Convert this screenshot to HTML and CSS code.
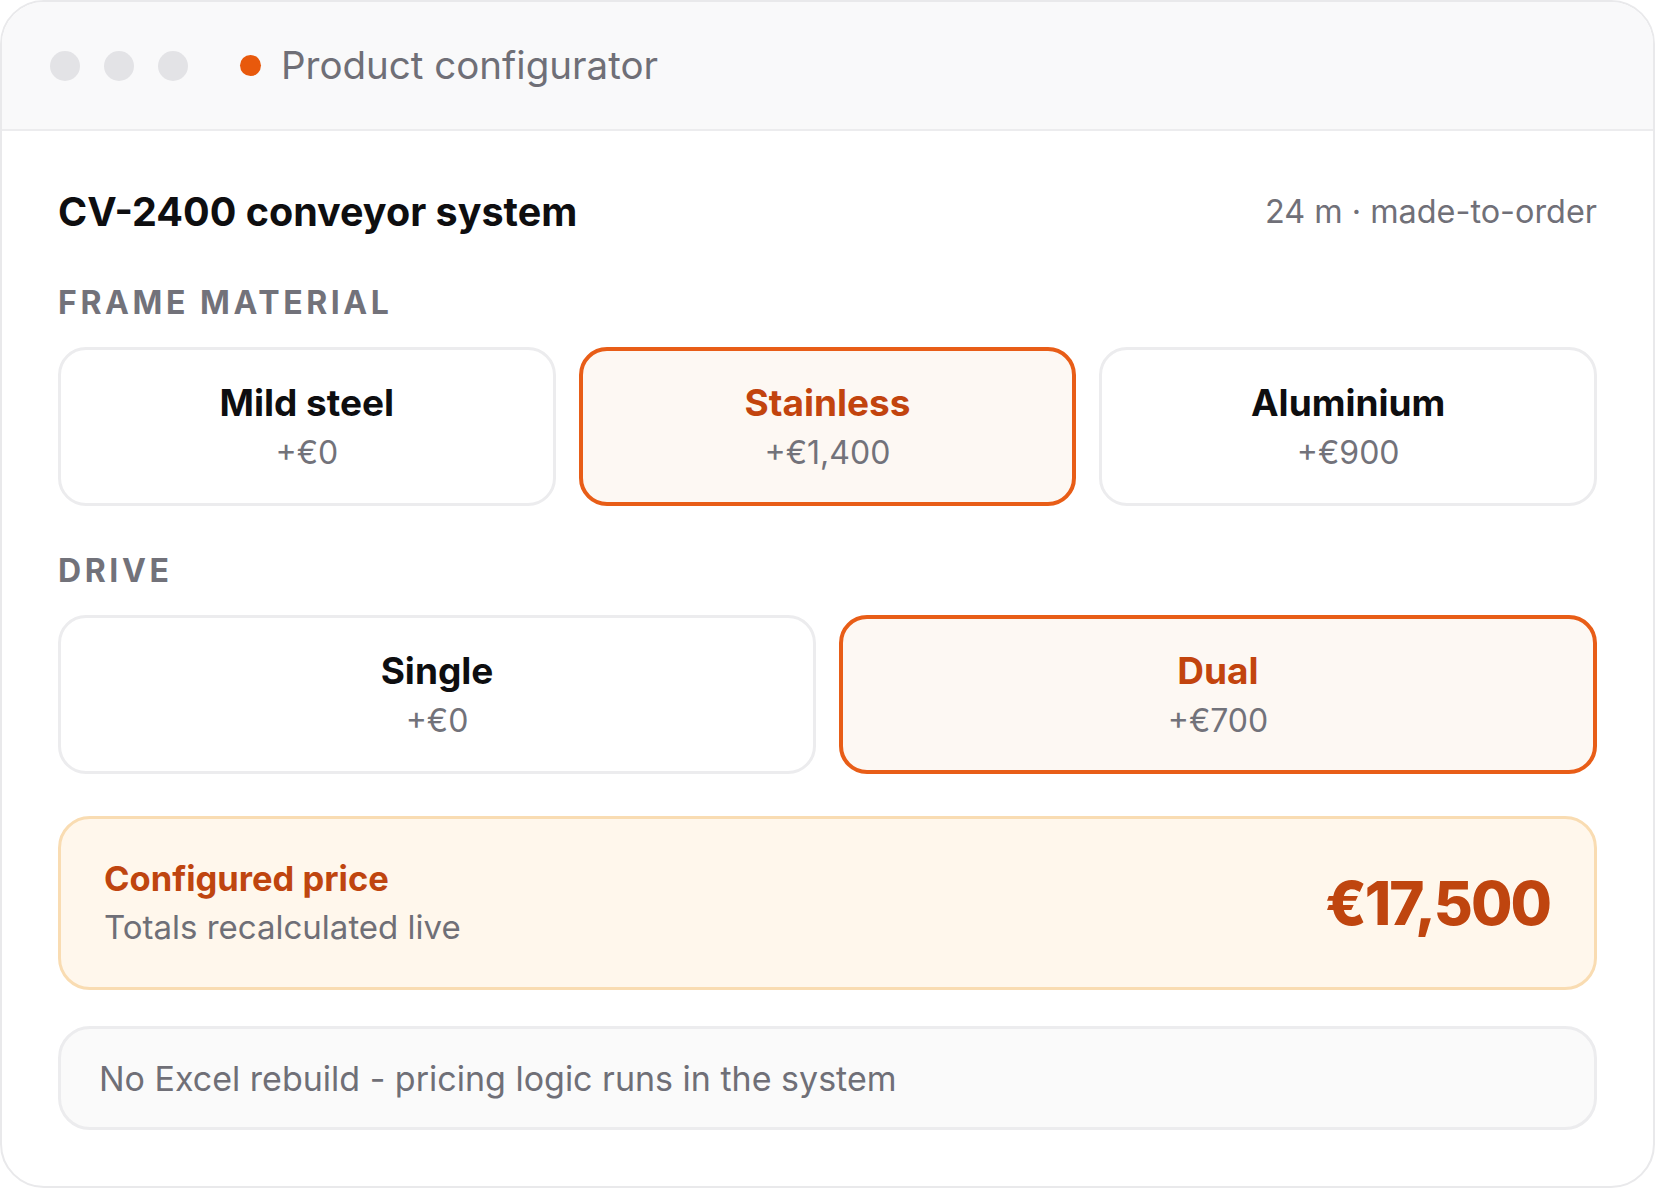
FILE: index.html
```html
<!DOCTYPE html>
<html lang="en">
<head>
<meta charset="utf-8">
<title>Product configurator</title>
<link rel="stylesheet" href="styles.css">
</head>
<body>
<div class="window">
  <header class="titlebar">
    <div class="dots">
      <span class="dot"></span><span class="dot"></span><span class="dot"></span>
    </div>
    <span class="live"></span>
    <span class="title">Product configurator</span>
  </header>
  <main class="content">
    <div class="head">
      <h1 class="product">CV-2400 conveyor system</h1>
      <span class="meta">24 m · made-to-order</span>
    </div>

    <h2 class="label label-frame">FRAME MATERIAL</h2>
    <div class="options three">
      <div class="option"><span class="opt-name">Mild steel</span><span class="opt-price">+€0</span></div>
      <div class="option selected"><span class="opt-name">Stainless</span><span class="opt-price">+€1,400</span></div>
      <div class="option"><span class="opt-name">Aluminium</span><span class="opt-price">+€900</span></div>
    </div>

    <h2 class="label label-drive">DRIVE</h2>
    <div class="options two">
      <div class="option"><span class="opt-name">Single</span><span class="opt-price">+€0</span></div>
      <div class="option selected"><span class="opt-name">Dual</span><span class="opt-price">+€700</span></div>
    </div>

    <section class="total">
      <div class="total-text">
        <span class="total-title">Configured price</span>
        <span class="total-sub">Totals recalculated live</span>
      </div>
      <span class="total-value">€17,500</span>
    </section>

    <div class="note">No Excel rebuild - pricing logic runs in the system</div>
  </main>
</div>
</body>
</html>
```

FILE: styles.css
```css
* { box-sizing: border-box; }

html, body {
  margin: 0;
  padding: 0;
  background: #ffffff;
}

body {
  font-family: Inter, "Noto Sans", "Liberation Sans", sans-serif;
  color: #111113;
}

.window {
  width: 1655px;
  height: 1188px;
  border: 2px solid #e9e9eb;
  border-radius: 44px;
  background: #ffffff;
  overflow: hidden;
}

.titlebar {
  height: 129px;
  background: #f9f9fa;
  border-bottom: 2px solid #ececee;
  display: flex;
  align-items: center;
  padding-left: 48px;
}

.dots {
  display: flex;
  gap: 24px;
}

.dot {
  width: 30px;
  height: 30px;
  border-radius: 50%;
  background: #e3e3e6;
}

.live {
  width: 21px;
  height: 21px;
  border-radius: 50%;
  background: #e8590c;
  margin-left: 52px;
}

.title {
  margin-left: 20px;
  font-size: 38.5px;
  color: #6f6f77;
  line-height: 1;
}

.content {
  padding: 58px 56px 0 56px;
}

.head {
  display: flex;
  justify-content: space-between;
  align-items: center;
  height: 46px;
}

.product {
  margin: 0;
  font-size: 39.5px;
  font-weight: 700;
  line-height: 46px;
  color: #0e0e10;
}

.meta {
  font-size: 32.4px;
  color: #707078;
  line-height: 46px;
}

.label {
  margin: 0;
  font-size: 32px;
  font-weight: 700;
  line-height: 40px;
  letter-spacing: 3.6px;
  color: #72727a;
}

.label-frame { margin-top: 48px; }
.label-drive { margin-top: 45px; }

.options {
  display: grid;
  gap: 23px;
  margin-top: 24px;
}

.options.three { grid-template-columns: repeat(3, 1fr); }
.options.two { grid-template-columns: repeat(2, 1fr); }

.option {
  height: 159px;
  border: 3px solid #ececee;
  border-radius: 28px;
  background: #ffffff;
  display: flex;
  flex-direction: column;
  align-items: center;
  justify-content: center;
  gap: 8px;
}

.option.selected {
  border: 4px solid #e85d17;
  background: #fdf8f3;
}

.opt-name {
  font-size: 37px;
  font-weight: 700;
  line-height: 44px;
  color: #0e0e10;
}

.option.selected .opt-name { color: #c2440e; }

.opt-price {
  font-size: 32px;
  line-height: 40px;
  color: #72727a;
}

.total {
  margin-top: 42px;
  height: 174px;
  border: 3px solid #f9dcb2;
  border-radius: 32px;
  background: #fff7ec;
  display: flex;
  align-items: center;
  justify-content: space-between;
  padding: 0 44px 0 43px;
}

.total-text {
  display: flex;
  flex-direction: column;
}

.total-title {
  font-size: 34.5px;
  font-weight: 700;
  line-height: 48px;
  color: #bf450f;
}

.total-sub {
  font-size: 33px;
  line-height: 48px;
  color: #6f6f77;
}

.total-value {
  font-size: 60px;
  font-weight: 800;
  color: #bf450f;
  letter-spacing: -2px;
  line-height: 1;
}

.note {
  margin-top: 36px;
  height: 104px;
  border: 3px solid #ececee;
  border-radius: 32px;
  background: #fafafa;
  display: flex;
  align-items: center;
  padding-left: 38px;
  font-size: 34px;
  color: #6f6f77;
}
```
